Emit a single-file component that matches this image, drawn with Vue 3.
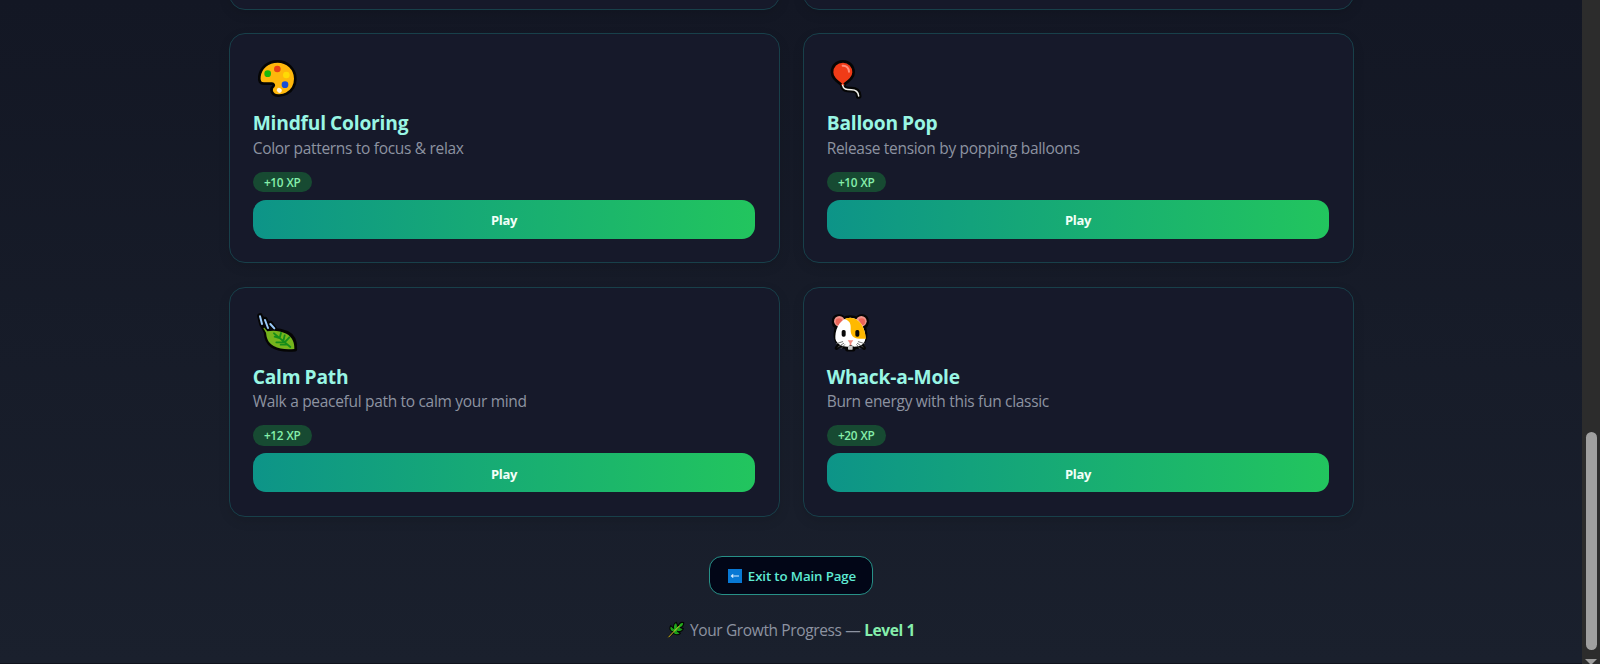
<script setup>
const games = [
  { id: 'palette', box: '9 24 144 126', title: 'Mindful Coloring', desc: 'Color patterns to focus & relax', xp: 10 },
  { id: 'balloon', box: '22 24 144 126', title: 'Balloon Pop', desc: 'Release tension by popping balloons', xp: 10 },
  { id: 'leaf', box: '9 24 144 126', title: 'Calm Path', desc: 'Walk a peaceful path to calm your mind', xp: 12 },
  { id: 'hamster', box: '22 24 144 126', title: 'Whack-a-Mole', desc: 'Burn energy with this fun classic', xp: 20 },
]
</script>

<template>
  <div class="window">
    <main class="page">
      <section class="grid">
        <div class="card previous"></div>
        <div class="card previous"></div>
        <article v-for="g in games" :key="g.id" class="card">
          <svg class="icon" :viewBox="g.box" fill="none" stroke-linecap="round" stroke-linejoin="round">
            <template v-if="g.id === 'palette'">
              <path d="M83 34C53 34 31 54 28 80C26 95 31 101 42 101H66C71 101 73 105 70 109C62 116 63 126 71 133C78 139 98 137 110 131C126 122 136 105 136 86C136 57 112 34 83 34Z" fill="#ffb70b" stroke="#050505" stroke-width="8" />
              <circle cx="53" cy="71" r="10" fill="#19b80b" />
              <circle cx="82" cy="57" r="10" fill="#ea4216" />
              <circle cx="109" cy="75" r="10" fill="#ffda05" />
              <circle cx="105" cy="104" r="10" fill="#174ed5" />
              <ellipse cx="88" cy="121" rx="8" ry="7" fill="#fff5df" transform="rotate(35 88 121)" />
            </template>
            <template v-else-if="g.id === 'balloon'">
              <path d="M69 104C70 118 80 119 95 119C109 119 116 124 117 138" stroke="#050505" stroke-width="17" />
              <path d="M70 34C50 34 37 48 37 67C37 83 55 97 64 103H74C83 97 102 83 102 67C102 48 89 34 70 34Z" fill="#f03b17" stroke="#050505" stroke-width="8" />
              <path d="M69 95L64 106H75Z" fill="#f03b17" />
              <path d="M69 106C71 118 80 119 95 119C109 119 116 125 117 138" stroke="#f2f2ed" stroke-width="4.5" />
              <path d="M69 47C80 46 88 54 88 65" stroke="#ff8e79" stroke-width="6" />
            </template>
            <template v-else-if="g.id === 'leaf'">
              <path d="M30 36L36 60L47 78M45 47L54 72M61 59L72 74M32 40L62 74" stroke="#050505" stroke-width="17" />
              <path d="M44 71L52 82C69 76 91 79 111 87C130 96 136 116 135 136C111 138 86 137 68 126C50 114 48 100 48 85Z" fill="#76b51d" stroke="#050505" stroke-width="13" />
              <path d="M43 71L52 82C69 78 91 80 109 89C128 99 134 117 133 135C111 137 88 136 71 126C52 114 50 101 48 86L40 72Z" fill="#76b51d" />
              <path d="M30 37L36 60M45 48L54 72M61 60L73 73" stroke="#9bcafa" stroke-width="6" />
              <path d="M72 88L121 129M89 102L93 87M89 102L74 98M104 115L118 100M104 115L79 115M100 112L104 94M112 122H92" stroke="#168c1a" stroke-width="5.5" />
            </template>
            <template v-else>
              <path d="M91 40C83 40 77 42 72 45C66 33 44 35 43 51C42 60 47 66 52 68C48 83 46 93 50 105C54 119 64 128 83 130V136H101V130C120 129 130 119 135 105C139 93 136 81 132 68C137 66 143 60 141 51C140 35 119 33 113 45C107 42 99 40 91 40Z" fill="#050505" stroke="#050505" stroke-width="13" />
              <path d="M60 122L51 132M124 122L133 132" stroke="#050505" stroke-width="12" />
              <circle cx="59" cy="52" r="16" fill="#f0948a" />
              <circle cx="125" cy="52" r="16" fill="#f0948a" />
              <circle cx="58" cy="53" r="10" fill="#ec6558" />
              <circle cx="126" cy="53" r="10" fill="#ec6558" />
              <path d="M92 41C65 41 48 69 47 97C45 118 64 128 84 128L93 122L103 128C125 128 140 117 137 96C135 68 119 41 92 41Z" fill="#fff" />
              <path d="M80 43C112 34 135 62 139 104H119C101 104 92 94 93 75C94 61 91 50 75 46Z" fill="#ffb900" />
              <rect x="66" y="78" width="12" height="20" rx="5" fill="#080808" />
              <rect x="107" y="78" width="12" height="20" rx="5" fill="#080808" />
              <path d="M84 109H101L95 117V124H90V117Z" fill="#f18a80" />
              <rect x="85" y="125" width="14" height="12" rx="2" fill="#c9c9c9" />
              <path d="M50 119L69 113M55 129L72 118M64 134L75 122M116 113L135 119M113 118L130 129M111 122L121 134" stroke="#555" stroke-width="2.5" />
            </template>
          </svg>
          <h3>{{ g.title }}</h3>
          <p class="desc">{{ g.desc }}</p>
          <span class="xp">+{{ g.xp }} XP</span>
          <button class="play">Play</button>
        </article>
      </section>

      <button class="exit">
        <svg class="arrow" viewBox="0 0 14 14">
          <rect width="14" height="14" fill="#0878d4" />
          <path d="M11 7H3.5M5.2 5.3L3.4 7L5.2 8.7" fill="none" stroke="#d5ecff" stroke-width="1.1" />
        </svg>
        <span>Exit to Main Page</span>
      </button>

      <footer class="progress">
        <svg class="herb" viewBox="54 242 54 54" fill="none" stroke-linecap="round" stroke-linejoin="round">
          <path d="M58 290L74 275C61 272 61 263 65 256L74 264C72 257 76 249 82 246L87 259C90 249 97 245 104 247C104 256 100 260 94 262L103 265C99 273 92 275 85 273L94 279C88 285 79 284 73 279Z" fill="#22ac1c" stroke="#050805" stroke-width="3.5" />
          <path d="M76 273L67 262M84 264L81 253M76 273L88 279M84 265L97 267" stroke="#0f7a12" stroke-width="1.6" />
          <path d="M59 290L91 257" stroke="#e0c42c" stroke-width="3" />
        </svg>
        <span class="label">Your Growth Progress —</span>
        <strong>Level 1</strong>
      </footer>
    </main>
    <aside class="scrollbar">
      <div class="thumb"></div>
      <div class="down"></div>
    </aside>
  </div>
</template>

<style>
html, body { margin: 0; overflow: hidden; background: #151a27; }
</style>

<style scoped>
.window {
  display: flex;
  width: 1600px;
  height: 664px;
  overflow: hidden;
  font-family: "Open Sans", "Noto Sans", sans-serif;
}
.page {
  flex: 1;
  display: flex;
  flex-direction: column;
  align-items: center;
  height: 663px;
  overflow: hidden;
  border-bottom: 1px solid #10131d;
  background: linear-gradient(180deg, #131724 0%, #1a202d 100%);
}
.grid {
  display: grid;
  grid-template-columns: 551px 551px;
  grid-template-rows: 230px 230px 230px;
  gap: 23.4px 23px;
  margin-top: -220.2px;
  flex: none;
}
.card {
  box-sizing: border-box;
  display: flex;
  flex-direction: column;
  align-items: flex-start;
  padding: 23.6px 23.2px;
  border: 1px solid #18404a;
  border-radius: 16px;
  background: #16192a;
  box-shadow: 0 4px 12px rgba(0, 0, 0, 0.1);
}
.icon { display: block; width: 48px; height: 42px; margin: 0.6px 0 0 0.8px; overflow: visible; flex: none; }
h3 {
  margin: 8.9px 0 0;
  font-size: 19.2px;
  line-height: 27px;
  font-weight: 700;
  letter-spacing: -0.2px;
  word-spacing: -0.6px;
  color: #99f6e4;
  white-space: nowrap;
}
.desc {
  margin: -0.4px 0 0;
  font-size: 15.5px;
  line-height: 24px;
  letter-spacing: -0.31px;
  color: #8d93a1;
  white-space: nowrap;
}
.xp {
  margin-top: 11.8px;
  padding: 0 11.2px;
  height: 21px;
  border-radius: 11px;
  background: #174a32;
  color: #86efac;
  font-size: 11.8px;
  line-height: 20px;
  font-weight: 600;
  letter-spacing: -0.3px;
  word-spacing: 0.4px;
}
button { font-family: inherit; }
.play {
  width: 100%;
  height: 39px;
  margin-top: 7.6px;
  padding: 2px 0 0;
  border: 0;
  border-radius: 13px;
  background: linear-gradient(90deg, #0d9488, #22c55e);
  color: #f2fff8;
  font-size: 13px;
  font-weight: 700;
  letter-spacing: -0.3px;
}
.exit {
  display: flex;
  align-items: center;
  justify-content: center;
  gap: 6px;
  flex: none;
  box-sizing: border-box;
  width: 164px;
  height: 39px;
  margin-top: 39.1px;
  padding: 1px 0 0 2px;
  border: 1px solid #279087;
  border-radius: 13px;
  background: #020617;
  color: #5eead4;
  font-size: 13.3px;
  font-weight: 600;
  letter-spacing: -0.13px;
  white-space: nowrap;
}
.arrow { width: 14px; height: 14px; flex: none; }
.progress {
  display: flex;
  align-items: center;
  margin-top: 23.4px;
  height: 24px;
  font-size: 15.5px;
  line-height: 24px;
  white-space: nowrap;
  color: #8d93a1;
}
.herb { width: 18px; height: 18px; margin-right: 5px; }
.label { letter-spacing: -0.38px; margin-right: 4px; }
.progress strong { color: #86efac; font-weight: 700; letter-spacing: -0.4px; }
.scrollbar {
  display: flex;
  flex-direction: column;
  align-items: center;
  width: 18px;
  height: 664px;
  background: #2c2c2c;
}
.thumb {
  flex: none;
  width: 11px;
  height: 218px;
  margin-top: 432px;
  border-radius: 6px;
  background: #9f9f9f;
}
.down {
  margin-top: 9px;
  border: 6px solid transparent;
  border-top-color: #9f9f9f;
  border-bottom: 0;
}
</style>
